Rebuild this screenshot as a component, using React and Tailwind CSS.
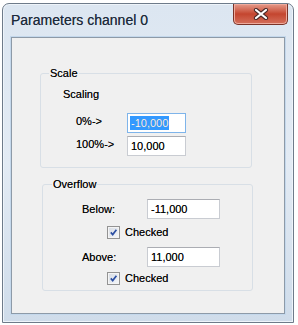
import React from "react";

const font = { fontFamily: '"Liberation Sans", Arial, sans-serif' };

const CheckBox = () => (
  <span className="flex h-[13px] w-[13px] items-center justify-center border border-[#939393] bg-gradient-to-br from-[#d6dbe3] to-[#f6f8fb] shadow-[inset_0_0_0_1px_#f4f4f4]">
    <svg width="9" height="9" viewBox="0 0 9 9">
      <path d="M1.8 4.4 L3.7 6.6 L7.4 1.8" fill="none" stroke="#2c4fa3" strokeWidth="1.7" />
    </svg>
  </span>
);

const Field = ({ value, width, focused }) => (
  <div
    className={
      "flex h-[20px] items-center border bg-white pl-[2px] " +
      (focused ? "border-[#7eb4ea]" : "border-[#c9ccd2] border-t-[#abadb3]")
    }
    style={{ width }}
  >
    {focused ? (
      <span className="bg-[#3399ff] px-[1px] leading-[14px] text-white">{value}</span>
    ) : (
      <span className="px-[1px]">{value}</span>
    )}
  </div>
);

const App = () => {
  return (
    <div
      className="h-[325px] w-[298px] bg-white pl-[2px] pt-[3px] text-[11px] text-black [text-shadow:0_0_0.4px_rgba(0,0,0,0.6)]"
      style={font}
    >
      <div className="flex h-[320px] w-[292px] flex-col rounded-t-[7px] border border-[#6e7b8a] bg-gradient-to-b from-[#dce6f1] via-[#e3ebf4] to-[#cfdcea] shadow-[inset_0_0_0_1px_#eef4fa]">
        <div className="flex h-[33px] items-start">
          <span className="pl-[8px] pt-[8px] text-[14px] leading-[16px] text-[#1c2b3d]">Parameters channel 0</span>
          <div className="ml-auto mr-[5px] flex h-[21px] w-[55px] items-center justify-center rounded-b-[5px] border border-t-0 border-[#7a3328] bg-gradient-to-b from-[#e59a8a] via-[#c4452f] to-[#d46f5b] shadow-[inset_0_0_0_1px_#eeaa9c]">
            <svg width="16" height="12" viewBox="0 0 16 12">
              <path d="M3 2 L13 10 M13 2 L3 10" stroke="#4a2a28" strokeWidth="4.2" strokeLinecap="round" />
              <path d="M3 2 L13 10 M13 2 L3 10" stroke="#ffffff" strokeWidth="2.2" strokeLinecap="round" />
            </svg>
          </div>
        </div>
        <div className="mx-[8px] mb-[8px] flex-1 border border-[#8d9aa8] bg-[#f0f0f0] shadow-[0_0_0_1px_#c4d8ec]">
          <fieldset className="ml-[28px] mt-[28px] w-[212px] rounded-[3px] border border-[#d8dfe6] pb-[11px]">
            <legend className="ml-[8px] px-[1px] leading-[14px]">Scale</legend>
            <div className="pl-[22px] pt-[7px] leading-[14px]">Scaling</div>
            <div className="mt-[12px] flex items-center pl-[35px]">
              <span className="w-[51px] pb-[3px]">0%-&gt;</span>
              <Field value="-10,000" width={59} focused />
            </div>
            <div className="mt-[3px] flex items-center pl-[35px]">
              <span className="w-[51px] pb-[3px]">100%-&gt;</span>
              <Field value="10,000" width={59} />
            </div>
          </fieldset>
          <fieldset className="ml-[30px] mt-[9px] w-[211px] rounded-[3px] border border-[#d8dfe6] pb-[3px]">
            <legend className="ml-[9px] px-[1px] leading-[14px]">Overflow</legend>
            <div className="mt-[8px] flex items-center pl-[39px]">
              <span className="w-[65px]">Below:</span>
              <Field value="-11,000" width={73} />
            </div>
            <div className="mt-[4px] flex h-[18px] items-center gap-[5px] pl-[64px]">
              <CheckBox />
              <span>Checked</span>
            </div>
            <div className="mt-[6px] flex items-center pl-[39px]">
              <span className="w-[65px]">Above:</span>
              <Field value="11,000" width={73} />
            </div>
            <div className="mt-[2px] flex h-[18px] items-center gap-[5px] pl-[64px]">
              <CheckBox />
              <span>Checked</span>
            </div>
          </fieldset>
        </div>
      </div>
    </div>
  );
};

export default App;
